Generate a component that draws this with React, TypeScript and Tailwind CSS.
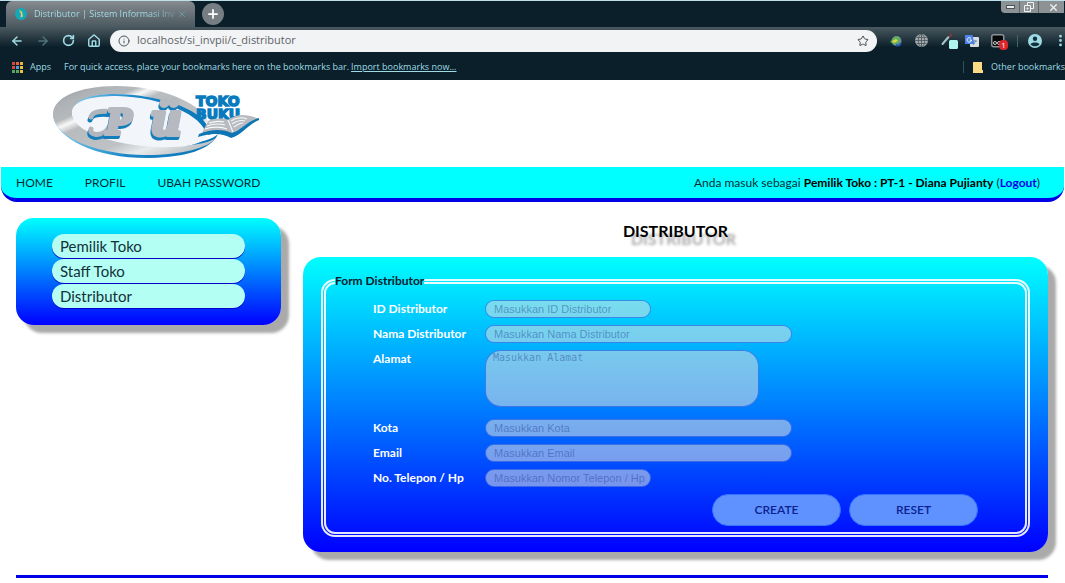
import type { ReactNode } from "react";
import { ArrowLeft, ArrowRight, RotateCw, House, Info, Star, Plus, X, EllipsisVertical } from "lucide-react";

function BrowserChrome() {
  return (
    <header className="overflow-hidden border-t border-[#bfe0e8] bg-[#0a1f29] font-['Open_Sans',sans-serif] text-[#9fdbe4]">
      <div className="flex h-[26px] items-center justify-between">
        <div className="flex h-full items-center">
          <div className="ml-[6px] flex h-full w-[189px] items-center rounded-t-md bg-linear-to-b from-[#868b8f] to-[#4b5960] pr-2 pl-[9px]">
            <svg className="size-3 shrink-0" viewBox="0 0 12 12">
              <circle cx="6" cy="6" r="6" fill="#12a9b8" />
              <path d="M4 2 7 3.500l1 5-2.500 1L6 6z" fill="#f1c76b" />
            </svg>
            <span className="ml-[7px] flex-1 bg-linear-to-r from-[#a5e3ec] from-80% to-[#6b868d] bg-clip-text text-[9px] whitespace-nowrap text-transparent">
              Distributor | Sistem Informasi Inv
            </span>
            <button aria-label="Close tab" className="text-[#6fa1ac]"><X size={10} /></button>
          </div>
          <button aria-label="New tab" className="ml-[7px] grid size-[22px] place-items-center rounded-full bg-[#777e83] text-white">
            <Plus size={14} strokeWidth={3} />
          </button>
        </div>
        <div className="mr-px flex h-3 self-start rounded-bl-sm bg-[#8d9295] text-[#e8eeee]">
          <button aria-label="Minimize" className="grid w-[19px] place-items-center border-r border-[#5d666b]">
            <svg width="9" height="4" viewBox="0 0 9 4"><rect x=".5" y=".5" width="8" height="3" fill="#e8eeee" stroke="#4c5559" /></svg>
          </button>
          <button aria-label="Restore" className="grid w-[19px] place-items-center border-r border-[#5d666b]">
            <svg width="10" height="10" viewBox="0 0 10 10" fill="none" stroke="#f0f4f4"><path d="M3.5 3V.5h6v6H7M.5 3.500h6v6h-6zM3 6h1v1H3z" /></svg>
          </button>
          <button aria-label="Close" className="grid w-[25px] place-items-center pl-1"><X size={11} strokeWidth={3} /></button>
        </div>
      </div>
      <div className="flex h-[27px] items-center bg-linear-to-b from-[#4b5960] to-[#0a1f29] to-75% pl-[10px]">
        <div className="flex w-[100px] items-center gap-3">
          <button aria-label="Back"><ArrowLeft size={14} strokeWidth={2.500} /></button>
          <button aria-label="Forward" className="text-[#4f727b]"><ArrowRight size={14} strokeWidth={2.500} /></button>
          <button aria-label="Reload"><RotateCw size={13} strokeWidth={3} /></button>
          <button aria-label="Home"><House size={14} strokeWidth={2.500} /></button>
        </div>
        <div className="flex h-[22px] flex-1 items-center rounded-full bg-[#f1f3f5] px-2">
          <Info size={12} className="text-[#4c5357]" />
          <input
            aria-label="Address"
            defaultValue="localhost/si_invpii/c_distributor"
            className="ml-[7px] flex-1 bg-transparent text-[11px] text-[#5d6367] outline-none"
          />
          <Star size={12} className="text-[#43494d]" />
        </div>
        <div className="-mr-[3px] flex items-center pl-[12px]">
          <svg width="14" height="14" viewBox="0 0 14 14">
            <circle cx="7.500" cy="7" r="5" fill="#6f8f9f" />
            <path d="M1 8 6 3h5l-2 3 2 2-6 2z" fill="#57b947" />
            <path d="M3 7 7 5l2 2-4 2z" fill="#e3d24d" />
            <path d="M7 11c2 1 4 0 5-2" stroke="#1f5aa8" strokeWidth="2" fill="none" />
          </svg>
          <svg className="ml-[12px]" width="13" height="13" viewBox="0 0 13 13" fill="none" stroke="#48565c">
            <circle cx="6.500" cy="6.500" r="6.500" fill="#a3a9ab" stroke="none" />
            <path d="M6.500 0v13M0 6.500h13M1.500 3.500h10M1.500 9.500h10" strokeWidth=".8" />
            <ellipse cx="6.500" cy="6.500" rx="3.200" ry="6.200" strokeWidth=".8" />
          </svg>
          <svg className="ml-[13px]" width="18" height="18" viewBox="0 0 18 18">
            <path d="m1.500 12 6-7" stroke="#a4c7c9" strokeWidth="2" strokeLinecap="round" />
            <path d="m8 5 3-3" stroke="#7d3a40" strokeWidth="2" />
            <rect x="8" y="8" width="9" height="9" rx="1.500" fill="#aef5ee" />
          </svg>
          <svg className="ml-[6px]" width="14" height="14" viewBox="0 0 14 14">
            <rect x="5" y="3" width="9" height="10" rx="1" fill="#d8dde0" />
            <path d="M8 7h4M10 6v1m-2 4 3-4" stroke="#6c8da8" />
            <path d="M0 1h7.500l2 9H0z" fill="#4b83ea" />
            <path d="M6 4.500a2.200 2.200 0 1 0 .5 1.500H4.500" stroke="#fff" fill="none" />
          </svg>
          <span className="relative ml-3 h-[14px] w-[14px]">
            <svg width="14" height="14" viewBox="0 0 14 14">
              <rect x=".75" y=".75" width="12" height="12" rx="2" fill="#050708" stroke="#8a9396" strokeWidth="1.500" />
              <circle cx="4" cy="9" r="1.500" fill="none" stroke="#ccc" />
              <circle cx="8" cy="9" r="1.500" fill="none" stroke="#ccc" />
            </svg>
            <span className="absolute top-[6px] left-[8px] grid h-[10px] w-[9px] place-items-center rounded-sm bg-[#e0262d] text-[8px] leading-none text-white">1</span>
          </span>
          <span className="ml-[12px] h-3 w-px bg-[#3f646b]" />
          <button aria-label="Profile" className="ml-[10px]">
            <svg width="14" height="14" viewBox="0 0 14 14">
              <circle cx="7" cy="7" r="7" fill="#9fdbe4" />
              <circle cx="7" cy="4.700" r="2.200" fill="#12303b" />
              <path d="M2.500 10.200c1-2.400 8-2.400 9 0-2 2.700-7 2.700-9 0z" fill="#12303b" />
            </svg>
          </button>
          <button aria-label="Menu" className="ml-[11px]"><EllipsisVertical size={15} strokeWidth={2.500} /></button>
        </div>
      </div>
      <div className="flex h-[26px] items-center pl-[12px] text-[9px] whitespace-nowrap">
        <svg width="11" height="11" viewBox="0 0 11 11">
          <path d="M0 0h3v3H0zM0 4h3v3H0z" fill="#d9483b" />
          <path d="M4 0h3v3H4z" fill="#e0664a" />
          <path d="M8 0h3v3H8z" fill="#e8b33c" />
          <path d="M4 4h3v3H4z" fill="#4d9fd6" />
          <path d="M8 4h3v3H8zM8 8h3v3H8z" fill="#e8c33c" />
          <path d="M0 8h3v3H0zM4 8h3v3H4z" fill="#58a75a" />
        </svg>
        <span className="ml-[7px]">Apps</span>
        <span className="ml-[13px]">For quick access, place your bookmarks here on the bookmarks bar.</span>
        <a href="#import" className="ml-[2px] underline">Import bookmarks now...</a>
        <span className="ml-auto h-3 w-px bg-[#2f5550]" />
        <svg className="ml-[9px]" width="10" height="11" viewBox="0 0 10 11">
          <path d="M0 0h9v8h1v3H0z" fill="#fbdc85" />
        </svg>
        <span className="ml-[8px]">Other bookmarks</span>
      </div>
    </header>
  );
}

function Logo() {
  return (
    <svg width="212" height="78" viewBox="0 0 212 78" role="img" aria-label="PU Toko Buku" className="block">
      <defs>
        <linearGradient id="ring" x1="0" y1="0" x2="1" y2="1">
          <stop offset="0" stopColor="#8e9396" />
          <stop offset=".15" stopColor="#aeb2b6" />
          <stop offset=".27" stopColor="#b6b9bc" />
          <stop offset=".32" stopColor="#f8f8f8" />
          <stop offset=".38" stopColor="#b9bcbf" />
          <stop offset=".62" stopColor="#bfc2c5" />
          <stop offset=".74" stopColor="#e8eaeb" />
          <stop offset="1" stopColor="#a4a8ac" />
        </linearGradient>
        <linearGradient id="blue" x1="0" y1="0" x2="1" y2="0">
          <stop offset="0" stopColor="#7fcdf0" />
          <stop offset=".45" stopColor="#1a86c6" />
          <stop offset="1" stopColor="#0a76b8" />
        </linearGradient>
      </defs>
      <path d="M3 32c4 24 45 43 98 42 34-1 60-8 67-24-16 16-110 20-165-18z" fill="url(#blue)" />
      <path d="M158 37C148 17 109 2 66 2 28 2 3 14 3 30c0 23 44 41 94 41 35 0 61-7 69-17-10 7-35 9-59 8C62 60 23 47 22 29c0-11 18-18 43-18 40 0 79 14 91 28z" fill="url(#ring)" />
      <path d="M22 29c1 19 40 32 85 34 22 1 43-1 50-10 0-25-44-43-92-43-25 0-43 8-43 19z" fill="#f2f5f9" />
      <path d="M23 24C27 15 43 10 64 10c44 0 87 15 94 33l2 8-4-1c-3-18-43-37-89-38-24 0-40 4-44 12z" fill="url(#blue)" />
      <path d="M41 45c-2 6 8 7 14 3 5-4 7-9 9-16M41 33c1-5 10-7 22-5" fill="none" stroke="#b0b4bb" strokeWidth="5" strokeLinecap="round" className="[filter:drop-shadow(-1px_3px_0_#147dbc)]" />
      <g fontFamily="DejaVu Serif, serif" fontStyle="italic" fontWeight="700" strokeLinejoin="round" strokeWidth="4" fill="#b6bac0" stroke="#b6bac0" className="[filter:drop-shadow(-1px_3px_0_#147dbc)]">
        <text x="56" y="50" fontSize="34">P</text>
        <text x="100" y="51" fontSize="44">ü</text>
      </g>
      <g fontFamily="DejaVu Sans, sans-serif" fontWeight="700" fontSize="14" fill="#087abd" stroke="#087abd" strokeWidth="1.400">
        <text x="146" y="22">TOKO</text>
        <text x="146" y="35">BUKU</text>
      </g>
      <path d="m151 51 7-14c7-3 14-3 20-1 8-6 18-7 31-1-11 4-16 14-26 17-10-5-21-5-32-1z" fill="#b8bcc0" />
      <path d="m148 53 1-3c12-5 24-5 33-1 10-3 15-12 27-15v2c-12 5-17 15-28 18-9-5-20-5-33-1z" fill="#0d75b4" />
      <path d="m178 36 5 12M159 39c6-2 11-2 15-1m-17 4c7-3 14-2 18-1m-20 4c8-3 17-2 22 0m4-8c6-4 11-4 16-2m-15 5c6-4 10-4 13-3m-11 6c4-3 7-4 9-4" fill="none" stroke="#f7f8f9" strokeWidth="1.100" />
    </svg>
  );
}

const MENU = ["Pemilik Toko", "Staff Toko", "Distributor"];

function Row({ id, label, children }: { id: string; label: string; children: ReactNode }) {
  return (
    <div className="grid grid-cols-[112px_1fr] items-start">
      <label htmlFor={id} className="text-[12px] leading-[18px] font-bold text-white">{label}</label>
      <div className="flex">{children}</div>
    </div>
  );
}

const FIELD = "border border-[#0038e0]/50 bg-[#dae0e0]/55 text-[#103060] outline-none placeholder:text-[#203c90]/45";
const SHORT = `${FIELD} h-[18px] w-[166px] rounded-full pl-2 font-['Liberation_Sans',sans-serif] text-[11px]`;
const LONG = `${FIELD} h-[18px] w-[307px] rounded-full pl-2 font-['Liberation_Sans',sans-serif] text-[11px]`;
const ACTION = "h-8 w-[129px] rounded-full border border-[#3573ff] bg-[#5f91ff] text-[12px] font-semibold text-[#0a2290]";

export default function App() {
  return (
    <div className="min-h-screen overflow-hidden bg-white font-[Lato,sans-serif] text-black">
      <BrowserChrome />
      <div className="pt-1 pb-[5px] pl-[50px]"><Logo /></div>
      <nav className="mx-px flex h-[35px] items-center justify-between rounded-b-2xl border-b-4 border-[#0000e8] bg-[#00ffff] pt-px pr-6 pl-[15px] text-[#062b35]">
        <div className="flex gap-8 text-[12px]">
          <a href="#home">HOME</a>
          <a href="#profil">PROFIL</a>
          <a href="#password">UBAH PASSWORD</a>
        </div>
        <p className="text-[12px]">
          Anda masuk sebagai <b className="text-black">Pemilik Toko : PT-1 - Diana Pujianty</b> (
          <a href="#logout" className="font-bold text-[#0000e8]">Logout</a>)
        </p>
      </nav>
      <div className="flex items-start gap-[22px] pt-4 pr-[17px] pl-4">
        <aside className="w-[265px] shrink-0 rounded-[18px] bg-linear-to-b/srgb from-[#00ffff] to-[#0000ff] px-9 pt-4 pb-4 shadow-[8px_8px_3px_#aaaaaa]">
          <ul>
            {MENU.map((item) => (
              <li key={item} className="mb-px">
                <a href="#menu" className="block h-[24px] rounded-full bg-[#b4fff4] px-2 text-[15px] leading-[24px] text-[#12303a] shadow-[0_1px_0_#0000c8]">{item}</a>
              </li>
            ))}
          </ul>
        </aside>
        <main className="min-w-0 flex-1">
          <h1 className="mb-[14px] text-center text-[16px] leading-[25px] font-bold [text-shadow:8px_8px_3px_#aaaaaa]">DISTRIBUTOR</h1>
          <form className="rounded-[18px] bg-linear-to-b/srgb from-[#00ffff] to-[#0000ff] px-[18px] pt-4 pb-[15px] shadow-[8px_8px_3px_#aaaaaa]">
            <fieldset className="rounded-[14px] border-[5px] border-double border-white/90 px-[9px] pb-[6px]">
              <legend className="text-[12px] leading-[16px] font-bold text-[#06202a]">Form Distributor</legend>
              <div className="flex flex-col gap-[7px] pt-[11px] pl-[38px]">
                <Row id="id" label="ID Distributor"><input id="id" className={SHORT} placeholder="Masukkan ID Distributor" /></Row>
                <Row id="nama" label="Nama Distributor"><input id="nama" className={LONG} placeholder="Masukkan Nama Distributor" /></Row>
                <Row id="alamat" label="Alamat">
                  <textarea id="alamat" className={`${FIELD} mb-[5px] h-[57px] w-[274px] resize-none rounded-2xl px-[7px] font-['DejaVu_Sans_Mono',monospace] text-[10px] leading-[13px]`} placeholder="Masukkan Alamat" />
                </Row>
                <Row id="kota" label="Kota"><input id="kota" className={LONG} placeholder="Masukkan Kota" /></Row>
                <Row id="email" label="Email"><input id="email" type="email" className={LONG} placeholder="Masukkan Email" /></Row>
                <Row id="telp" label="No. Telepon / Hp"><input id="telp" type="tel" className={SHORT} placeholder="Masukkan Nomor Telepon / Hp" /></Row>
              </div>
              <div className="flex justify-end gap-2 pt-[7px] pr-[38px]">
                <button type="submit" className={ACTION}>CREATE</button>
                <button type="reset" className={ACTION}>RESET</button>
              </div>
            </fieldset>
          </form>
        </main>
      </div>
      <footer className="mr-[17px] ml-4 mt-[23px] border-t-[3px] border-[#0000e8]" />
    </div>
  );
}
